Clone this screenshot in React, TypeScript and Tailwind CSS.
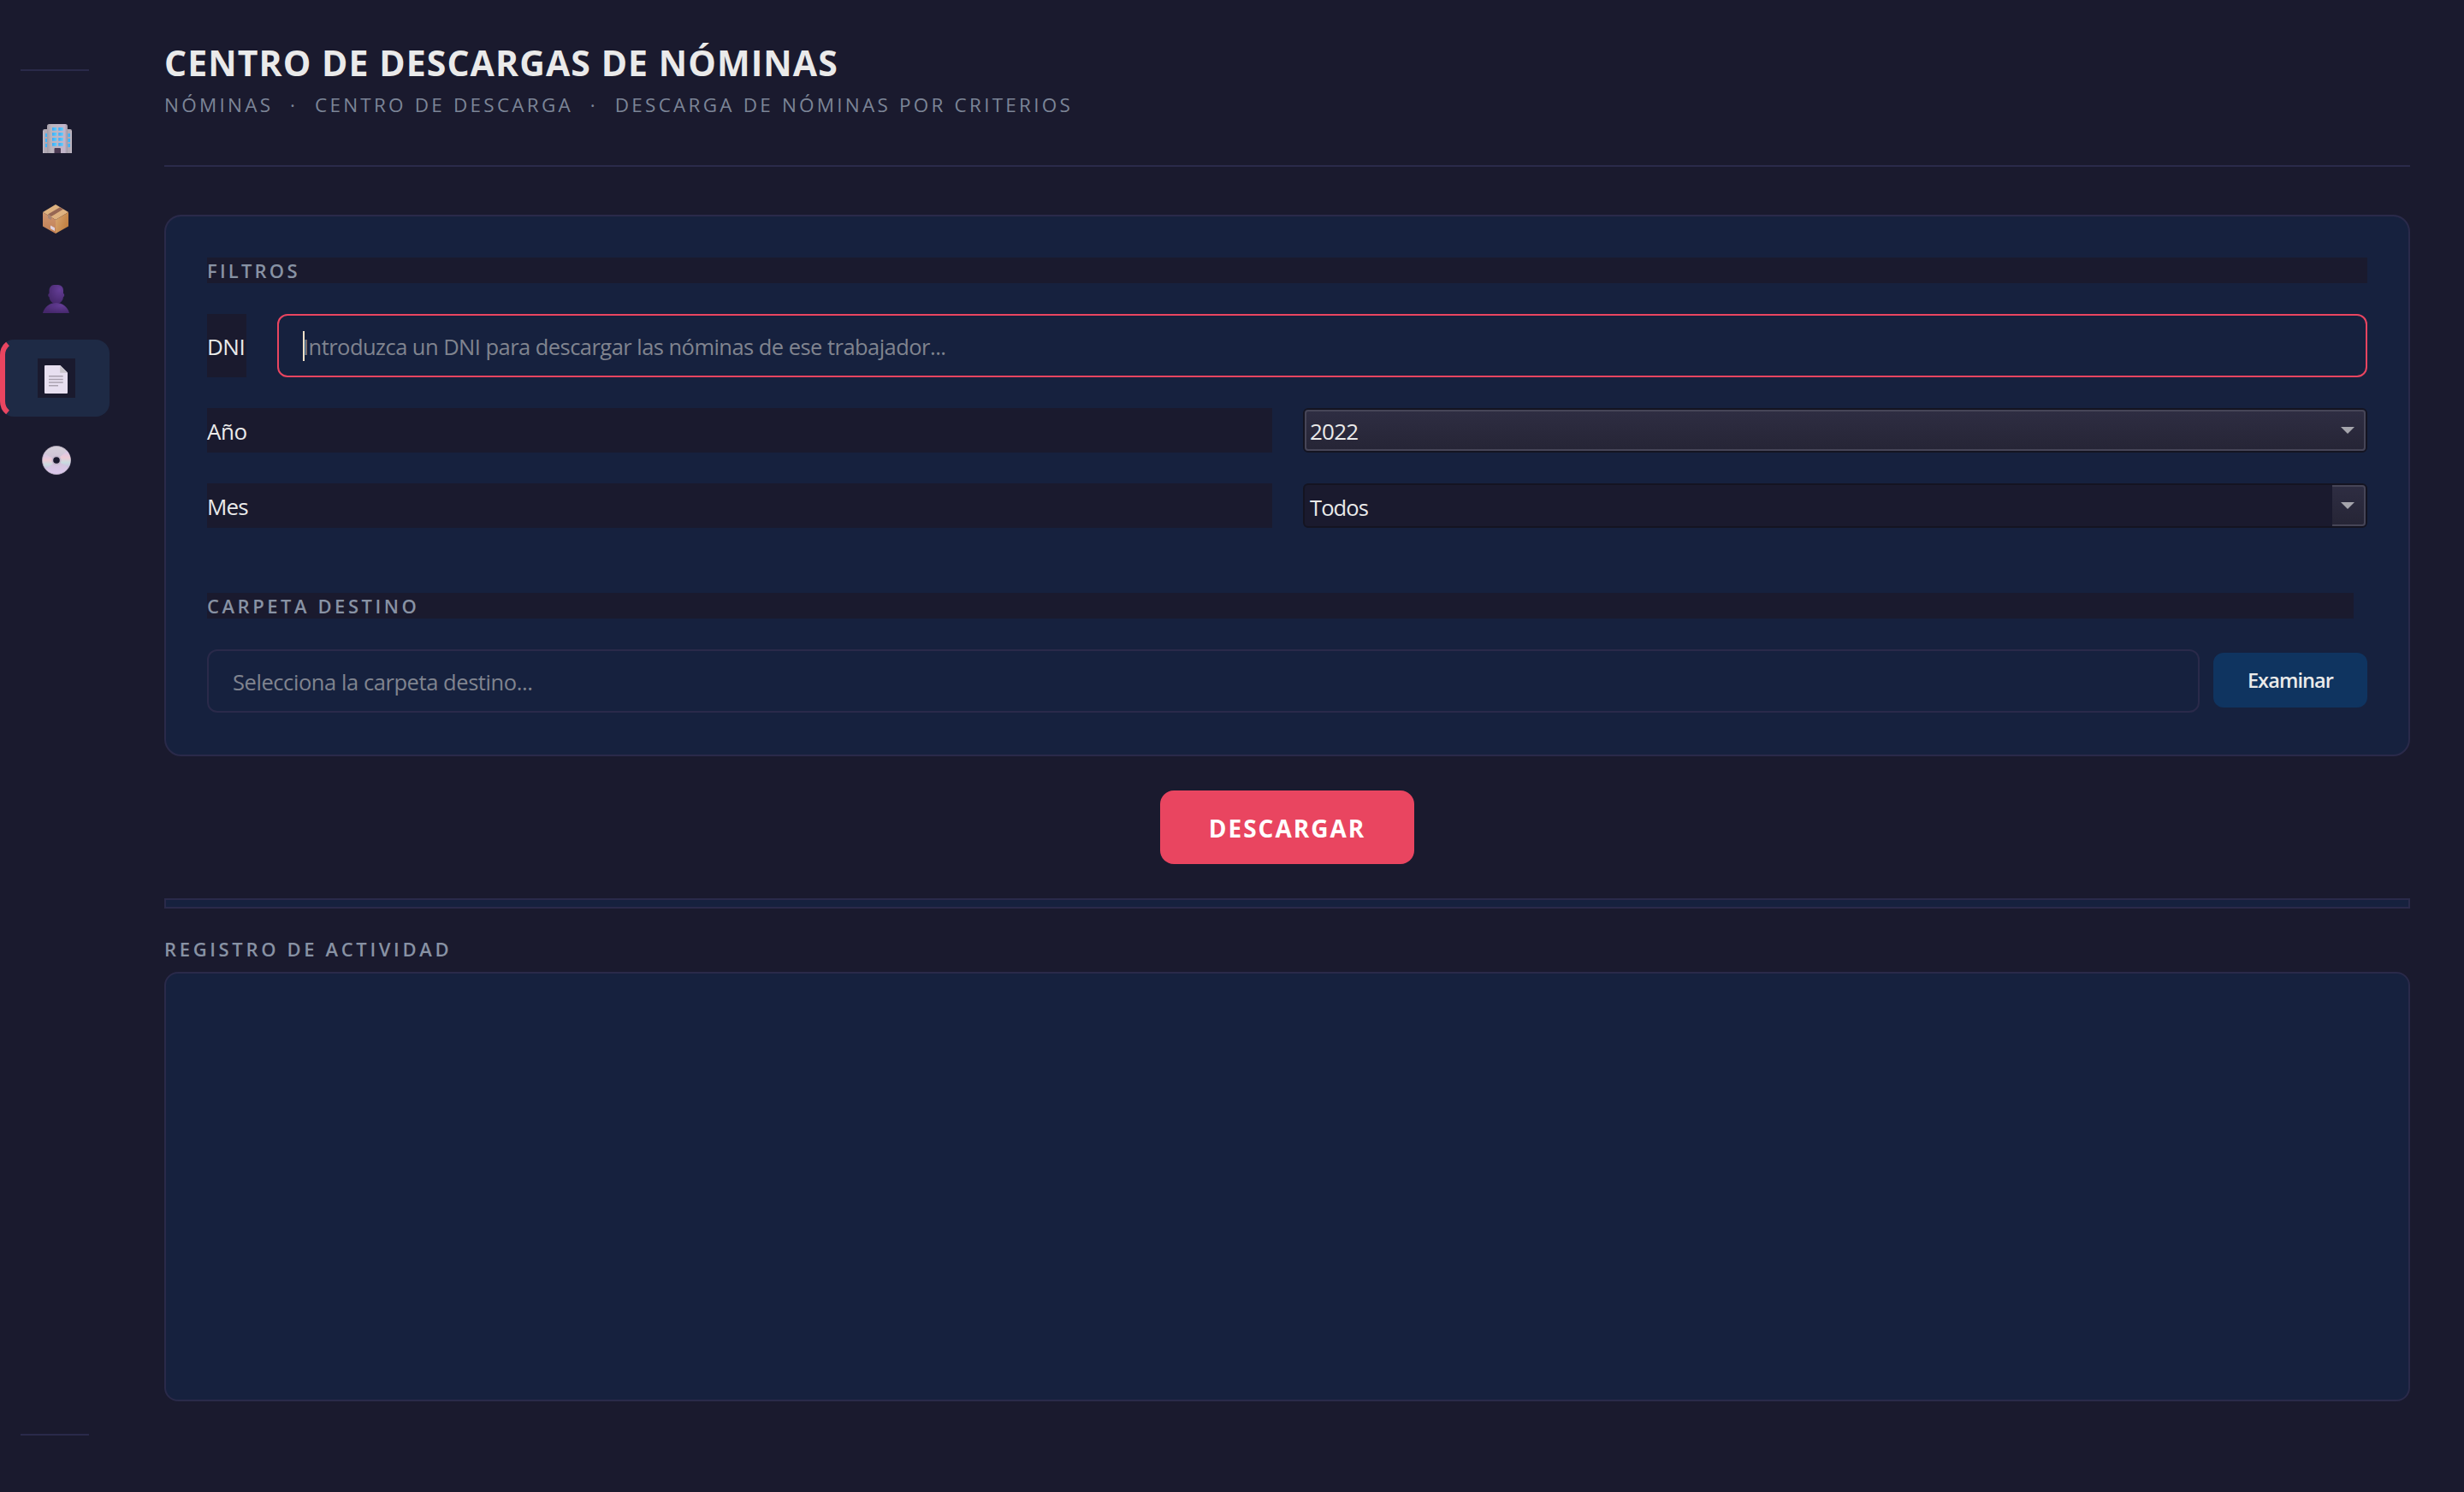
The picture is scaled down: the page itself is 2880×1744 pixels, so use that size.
import { useState } from 'react';
import type { ReactNode } from 'react';

function BuildingIcon() {
  const windows = [4, 10, 16, 22];
  return (
    <svg width="34" height="34" viewBox="0 0 34 34">
      <defs>
        <linearGradient id="tower" x1="0" x2="1">
          <stop offset="0" stopColor="#a39ca6" />
          <stop offset="0.2" stopColor="#bbb4bd" />
          <stop offset="0.85" stopColor="#c2b5cb" />
          <stop offset="1" stopColor="#9f98a3" />
        </linearGradient>
        <linearGradient id="glass" x1="0" x2="1">
          <stop offset="0" stopColor="#3fa9f5" />
          <stop offset="1" stopColor="#5cd0ff" />
        </linearGradient>
      </defs>
      <path d="M0 34V8a2 2 0 0 1 2-2h30a2 2 0 0 1 2 2v26z" fill="#b0a8b3" />
      <path d="M0 34V8h1.5v26zM32.5 8H34v26h-1.5z" fill="#cbc4ce" opacity="0.6" />
      {[11, 17, 23].map((y) => (
        <g key={y}>
          <rect x="3" y={y} width="2.6" height="4" fill="#3db4fa" />
          <rect x="29.4" y={y} width="2.6" height="4" fill="#3db4fa" />
        </g>
      ))}
      <path d="M5 34V2.5A2.5 2.5 0 0 1 7.5 0h19A2.5 2.5 0 0 1 29 2.5V34z" fill="url(#tower)" />
      {windows.map((y) => (
        <g key={y}>
          <rect x="11" y={y} width="5.3" height="3.7" fill="url(#glass)" />
          <rect x="18.3" y={y} width="5.5" height="3.7" fill="url(#glass)" />
        </g>
      ))}
      <path d="M13.5 34v-5a1 1 0 0 1 1-1h5.5a1 1 0 0 1 1 1v5z" fill="#4b3a53" />
    </svg>
  );
}

function PackageIcon() {
  return (
    <svg width="30" height="34" viewBox="0 0 30 34">
      <defs>
        <linearGradient id="boxLeft" x1="0" y1="0" x2="0" y2="1">
          <stop offset="0" stopColor="#cf9670" />
          <stop offset="1" stopColor="#c17f54" />
        </linearGradient>
        <linearGradient id="boxRight" x1="0" y1="0" x2="1" y2="0.6">
          <stop offset="0" stopColor="#d9a873" />
          <stop offset="1" stopColor="#c07e3f" />
        </linearGradient>
      </defs>
      <path d="M15 0 30 9 15 18 0 9z" fill="#deb280" />
      <path d="M0 9l15 9v16L0 25.5z" fill="url(#boxLeft)" />
      <path d="M30 9l-15 9v16l15-8.5z" fill="url(#boxRight)" />
      <path d="M20 3.2l4 2.3-14 8.4-4-2.3z" fill="#966753" />
      <path d="M6 11.6l4 2.3v4.3l-4-2.3z" fill="#a98472" />
      <path d="M9 24.5l5 2.8v3.7l-5-2.8z" fill="#dfd3e0" />
    </svg>
  );
}

function PersonIcon() {
  return (
    <svg width="31" height="33" viewBox="0 0 31 33">
      <defs>
        <radialGradient id="bust" cx="0.7" cy="0.25" r="0.8">
          <stop offset="0" stopColor="#643d96" />
          <stop offset="1" stopColor="#45276b" />
        </radialGradient>
      </defs>
      <path
        d="M7.5 6A6 6 0 0 1 13 0h5a6 6 0 0 1 6 6v4c1.6 0 1.6 4 0 4-.4 4.5-3.500 8-8.200 8s-7.900-3.500-8.300-8c-1.600 0-1.600-4 0-4z"
        fill="url(#bust)"
      />
      <path d="M0 33c2-7.500 8-12 15.500-12S29 25.500 31 33z" fill="url(#bust)" />
    </svg>
  );
}

function DocumentIcon() {
  return (
    <svg width="27" height="33" viewBox="0 0 27 33">
      <path d="M1 0h17.500L27 8.500V32a1 1 0 0 1-1 1H1a1 1 0 0 1-1-1V1a1 1 0 0 1 1-1z" fill="#e7dff0" />
      <path d="M18.200 0 27 8.800h-8.800z" fill="#c9c5cc" />
      <path d="M5 12.700h16.700M5 16.500h16.700M5 20h16.700M5 23.700h11" stroke="#aaa2b0" strokeWidth="1.4" />
    </svg>
  );
}

function DiscIcon() {
  return (
    <svg width="34" height="34" viewBox="0 0 34 34">
      <defs>
        <linearGradient id="disc" x1="0" y1="0" x2="0" y2="1">
          <stop offset="0" stopColor="#d6d0da" />
          <stop offset="0.5" stopColor="#cfc2d6" />
          <stop offset="1" stopColor="#dcc8ee" />
        </linearGradient>
        <linearGradient id="shine" x1="0" y1="0" x2="0" y2="1">
          <stop offset="0" stopColor="#d4c6ea" />
          <stop offset="0.4" stopColor="#efcbd6" />
          <stop offset="0.7" stopColor="#c9dbe0" />
          <stop offset="1" stopColor="#cbbbe0" />
        </linearGradient>
      </defs>
      <circle cx="17" cy="17" r="16.5" fill="url(#disc)" stroke="#b5a9bb" strokeWidth="0.8" />
      <path d="M17 17 3 9.500a16 16 0 0 0 2 18z" fill="url(#shine)" />
      <path d="M17 17 29 6a16 16 0 0 1 2 19.500z" fill="url(#shine)" />
      <circle cx="17" cy="17" r="5.5" fill="#c5b9cd" />
      <circle cx="17" cy="17" r="3.8" fill="#1a1a2e" />
    </svg>
  );
}

const navItems: { id: string; icon: ReactNode; offset: string }[] = [
  { id: 'empresas', icon: <BuildingIcon />, offset: 'pl-[50px] pt-1' },
  { id: 'paquetes', icon: <PackageIcon />, offset: 'pl-[50px] pt-1' },
  { id: 'trabajadores', icon: <PersonIcon />, offset: 'pl-[50px] pt-[3px]' },
  { id: 'nominas', icon: <DocumentIcon />, offset: 'pl-11' },
  { id: 'certificados', icon: <DiscIcon />, offset: 'pl-[49px] pt-[3px]' },
];

function Sidebar() {
  const [active, setActive] = useState('nominas');

  return (
    <nav className="flex w-32 shrink-0 flex-col pt-[81px] pb-[66px]">
      <div className="ml-6 h-[2px] w-20 bg-[#2a2a4a]" />
      <div className="mt-8 flex flex-1 flex-col gap-1">
        {navItems.map((item) => (
          <button
            key={item.id}
            onClick={() => setActive(item.id)}
            className={`relative flex h-[90px] items-center rounded-2xl ${item.offset} ${
              active === item.id ? 'bg-[#1e2a45]' : ''
            }`}
          >
            {active === item.id && (
              <svg className="absolute top-0 left-0" width="12" height="90" viewBox="0 0 12 90" fill="none">
                <path d="M9 5Q3 10 3 18V72Q3 80 9 85" stroke="#e94560" strokeWidth="6" />
              </svg>
            )}
            {item.id === 'nominas' ? (
              <span className="flex h-[46px] w-11 items-center bg-[#1a1a2e] pt-[3px] pl-2">{item.icon}</span>
            ) : (
              item.icon
            )}
          </button>
        ))}
      </div>
      <div className="ml-6 h-[2px] w-20 bg-[#2a2a4a]" />
    </nav>
  );
}

function Arrow() {
  return (
    <svg width="16" height="8" viewBox="0 0 16 8">
      <path d="M0 0h16L8 8z" fill="#a5a5ac" />
    </svg>
  );
}

export default function App() {
  return (
    <div className="flex h-[1744px] w-[2880px] overflow-hidden bg-[#1a1a2e] font-['Open_Sans','Noto_Sans',sans-serif] text-[26px] text-[#eaeaea]">
      <Sidebar />

      <main className="flex flex-1 flex-col pr-[63px] pl-16">
        <header className="flex h-[195px] flex-col border-b-2 border-[#2a2a4a] pt-11">
          <h1 className="h-[61px] text-[41px] leading-[58px] font-bold tracking-[1.08px] whitespace-pre">
            CENTRO DE DESCARGAS DE NÓMINAS
          </h1>
          <p className="h-9 text-[22.5px] leading-9 tracking-[3.25px] [word-spacing:0.8px] whitespace-pre text-[#7c8597]">
            NÓMINAS  ·  CENTRO DE DESCARGA  ·  DESCARGA DE NÓMINAS POR CRITERIOS
          </p>
        </header>

        <section className="mt-14 flex h-[633px] flex-col rounded-[20px] border-2 border-[#2a2a4a] bg-[#16213e] px-12 pt-12">
          <h2 className="h-[30px] bg-[#1a1a2e] text-[22px] leading-[31px] font-semibold tracking-[3.2px] text-[#8892a4]">
            FILTROS
          </h2>

          <div className="mt-9 flex h-[74px] gap-9">
            <label className="flex w-[46px] items-center bg-[#1a1a2e] pt-[2px] tracking-[-0.5px]">DNI</label>
            <div className="flex flex-1 items-center rounded-xl border-2 border-[#e94560] pl-7">
              <span className="h-[35px] w-[2px] bg-[#f0e0c8]" />
              <span className="-ml-[2px] pt-[2px] text-[25.5px] tracking-[-0.54px] text-[#80848f]">
                Introduzca un DNI para descargar las nóminas de ese trabajador...
              </span>
            </div>
          </div>

          <div className="mt-9 grid h-[52px] grid-cols-[1245px_1244px] gap-9">
            <label className="flex items-center bg-[#1a1a2e] pt-[2px] tracking-[-0.5px]">Año</label>
            <div className="rounded-md border-2 border-[#141421]">
              <div className="flex h-full items-center justify-between rounded-[4px] border-2 border-[#464557] bg-gradient-to-b from-[#2e2d42] to-[#262536] pr-[11px] pl-1">
                <span className="pt-[2px] tracking-[-0.8px]">2022</span>
                <Arrow />
              </div>
            </div>
          </div>

          <div className="mt-9 grid h-[52px] grid-cols-[1245px_1244px] gap-9">
            <label className="flex items-center bg-[#1a1a2e] pt-[2px] tracking-[-0.9px]">Mes</label>
            <div className="flex items-center justify-between rounded-md border-2 border-[#141421] bg-[#1a1a2e] pl-1.5">
              <span className="pt-1 text-[25.5px] tracking-[-0.9px]">Todos</span>
              <span className="flex h-full w-[39px] items-center justify-end rounded-r-[4px] border-y-2 border-r-2 border-[#464557] bg-gradient-to-b from-[#2e2d42] to-[#262536] pr-[11px]">
                <Arrow />
              </span>
            </div>
          </div>

          <h2 className="mt-[76px] mr-4 h-[30px] bg-[#1a1a2e] text-[22px] leading-[31px] font-semibold tracking-[3.55px] text-[#8892a4]">
            CARPETA DESTINO
          </h2>

          <div className="mt-9 flex h-[74px] gap-4">
            <div className="flex flex-1 items-center rounded-xl border-2 border-[#2a2a4a] pt-[2px] pl-7 text-[25.5px] tracking-[-0.43px] text-[#80848f]">
              Selecciona la carpeta destino...
            </div>
            <button className="mt-1 h-16 w-[180px] rounded-xl bg-[#0f3460] pt-[2px] text-[23.5px] font-semibold tracking-[-0.9px]">
              Examinar
            </button>
          </div>
        </section>

        <button className="mt-10 h-[86px] w-[297px] self-center rounded-2xl bg-[#e94560] pt-[2px] text-[28px] font-bold tracking-[2px] text-white">
          DESCARGAR
        </button>

        <div className="mt-10 h-3 border-2 border-[#2a2a4a] bg-[#16213e]" />

        <h2 className="mt-8 h-[30px] text-[22px] leading-[31px] font-semibold tracking-[3.65px] text-[#8892a4]">
          REGISTRO DE ACTIVIDAD
        </h2>
        <div className="mt-3 h-[502px] rounded-2xl border-2 border-[#2a2a4a] bg-[#16213e]" />
      </main>
    </div>
  );
}
